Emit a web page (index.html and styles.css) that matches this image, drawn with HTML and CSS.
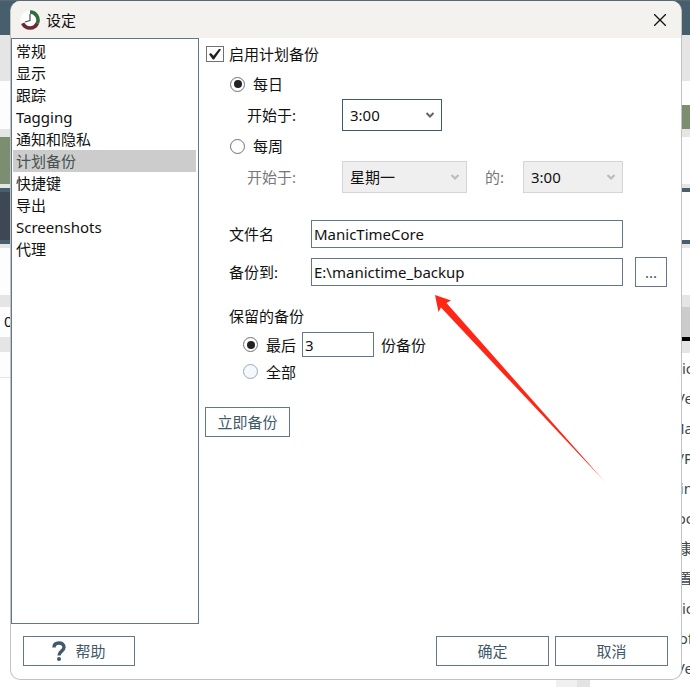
FILE: index.html
```
<!DOCTYPE html>
<html lang="zh-CN">
<head>
    <meta charset="UTF-8">
    <meta name="viewport" content="width=device-width, initial-scale=1.0">
    <title>设定</title>
    <link rel="stylesheet" href="styles.css">
</head>
<body>
    <!-- Main window behind the dialog -->
    <div class="backdrop">
        <div class="edge">
            <div class="bar slate h35"></div>
            <div class="bar grey h46"></div>
            <div class="bar h48"></div>
            <div class="bar grey h8"></div>
            <div class="bar green h47"></div>
            <div class="bar grey h4"></div>
            <div class="bar slate h4"></div>
            <div class="bar dark h48"></div>
            <div class="bar slate h4"></div>
            <div class="bar grey h4"></div>
            <div class="bar h47"></div>
            <div class="bar grey h12"></div>
            <div class="bar hour h30">0</div>
            <div class="bar grey h15"></div>
            <div class="bar day"></div>
        </div>
        <div class="scroll"></div>
        <div class="edge edge-right">
            <div class="bar slate h35"></div>
            <div class="bar grey h46"></div>
            <div class="bar h24"></div>
            <div class="bar green h24"></div>
            <div class="bar grey h8"></div>
            <div class="bar h47"></div>
            <div class="bar grey h4"></div>
            <div class="bar slate h4"></div>
            <div class="bar h48"></div>
            <div class="bar slate h4"></div>
            <div class="bar grey h4"></div>
            <div class="bar h47"></div>
            <div class="bar grey h12"></div>
            <div class="bar silver h30"></div>
            <div class="bar black h4"></div>
            <div class="bar grey h12"></div>
            <ul class="apps">
                <li>nic</li>
                <li>Ve</li>
                <li>Ma</li>
                <li>VP</li>
                <li>Vin</li>
                <li>oc</li>
                <li>康</li>
                <li>置</li>
                <li>aic</li>
                <li>of</li>
                <li>Ve</li>
            </ul>
        </div>
    </div>

    <div class="dialog">
        <header class="titlebar">
            <svg class="logo" viewBox="0 0 20 20" width="20" height="20">
                <circle cx="10" cy="10" r="9.500" fill="#fff"/>
                <path d="M10 2A8 8 0 0 1 17.300 13.300" fill="none" stroke="#2f6b3b" stroke-width="3.600"/>
                <path d="M17.300 13.300A8 8 0 0 1 2.700 13.300" fill="none" stroke="#6b2a2e" stroke-width="3.600"/>
                <path d="M10 4v6.500L5 12" fill="none" stroke="#555" stroke-width="1.300"/>
            </svg>
            <h1>设定</h1>
            <button class="close" type="button" aria-label="关闭">
                <svg viewBox="0 0 12 12" width="12" height="12">
                    <path d="M0 0L12 12M12 0L0 12" stroke="#111" stroke-width="1.300"/>
                </svg>
            </button>
        </header>

        <div class="content">
            <ul class="menu">
                <li>常规</li>
                <li>显示</li>
                <li>跟踪</li>
                <li>Tagging</li>
                <li>通知和隐私</li>
                <li class="selected">计划备份</li>
                <li>快捷键</li>
                <li>导出</li>
                <li>Screenshots</li>
                <li>代理</li>
            </ul>

            <form class="panel">
                <div class="row">
                    <input type="checkbox" id="enable" checked>
                    <label for="enable">启用计划备份</label>
                </div>
                <div class="row indent">
                    <input type="radio" name="period" id="daily" checked>
                    <label for="daily">每日</label>
                </div>
                <div class="row start">
                    <label for="daily-time">开始于:</label>
                    <div class="combo">
                        <select id="daily-time"><option>3:00</option></select>
                        <svg viewBox="0 0 8 6" width="8" height="6"><path d="M0.500 1l3.500 3.500 3.500-3.500"/></svg>
                    </div>
                </div>
                <div class="row indent">
                    <input type="radio" name="period" id="weekly">
                    <label for="weekly">每周</label>
                </div>
                <div class="row start disabled">
                    <label for="weekday">开始于:</label>
                    <div class="combo wide">
                        <select id="weekday" disabled><option>星期一</option></select>
                        <svg viewBox="0 0 8 6" width="8" height="6"><path d="M0.500 1l3.500 3.500 3.500-3.500"/></svg>
                    </div>
                    <label class="at" for="weekly-time">的:</label>
                    <div class="combo">
                        <select id="weekly-time" disabled><option>3:00</option></select>
                        <svg viewBox="0 0 8 6" width="8" height="6"><path d="M0.500 1l3.500 3.500 3.500-3.500"/></svg>
                    </div>
                </div>

                <div class="fields">
                    <label for="filename">文件名</label>
                    <input type="text" id="filename" value="ManicTimeCore">
                    <span></span>
                    <label for="folder">备份到:</label>
                    <input type="text" id="folder" value="E:\manictime_backup">
                    <button class="browse" type="button">...</button>
                </div>

                <h2>保留的备份</h2>
                <div class="row keep">
                    <input type="radio" name="keep" id="keep-last" checked>
                    <label for="keep-last">最后</label>
                    <input type="text" class="count" id="count" value="3">
                    <label for="count">份备份</label>
                </div>
                <div class="row keep">
                    <input type="radio" name="keep" id="keep-all">
                    <label for="keep-all">全部</label>
                </div>
                <button class="backup" type="button">立即备份</button>

                <svg class="arrow" viewBox="0 0 172 188" width="172" height="188">
                    <defs>
                        <linearGradient id="fade" x1="0" y1="0" x2="1" y2="1">
                            <stop offset="0.9" stop-color="#ff2616"/>
                            <stop offset="1" stop-color="#ff2616" stop-opacity="0.4"/>
                        </linearGradient>
                    </defs>
                    <path d="M0 0L16 5.500 11.500 8 171 188 6 12.500 3.500 17z" fill="url(#fade)"/>
                </svg>
            </form>
        </div>

        <footer class="footer">
            <button class="help" type="button">
                <svg viewBox="0 0 14 20" width="14" height="20">
                    <path d="M2 6.500C2 3.500 4 2 7 2s5 1.500 5 4.200c0 4-5 3.800-5 8.300" fill="none" stroke="#3f5a6b" stroke-width="3.400"/>
                    <circle cx="7" cy="18" r="2" fill="#3f5a6b"/>
                </svg>
                帮助
            </button>
            <button type="button">确定</button>
            <button type="button">取消</button>
        </footer>
    </div>
</body>
</html>
```
FILE: styles.css
```
* {
    box-sizing: border-box;
}
body {
    margin: 0;
    min-height: 100vh;
    display: flex;
    position: relative;
    background-color: #fff;
    font-family: "Noto Sans", "Noto Sans CJK SC", sans-serif;
    font-size: 15px;
    line-height: 22px;
    color: #111;
}
ul {
    list-style: none;
    margin: 0;
    padding: 0;
}
h1, h2 {
    margin: 0;
    font-size: 15px;
    font-weight: normal;
}

/* main window */
.backdrop {
    position: absolute;
    inset: 0;
    display: flex;
    justify-content: space-between;
    overflow: hidden;
    border-top: 1px solid #596974;
}
.edge {
    width: 24px;
    margin-top: -1px;
}
.bar {
    background-color: #fdfdfd;
}
.grey { background-color: #e5e5e5; }
.slate { background-color: #475e6d; }
.green { background-color: #7b8f70; }
.dark { background-color: #3e4754; }
.silver { background-color: #ccc; }
.black { background-color: #000; }
.h4 { height: 4px; }
.h8 { height: 8px; }
.h12 { height: 12px; }
.h15 { height: 15px; }
.h24 { height: 24px; }
.h30 { height: 30px; }
.h35 { height: 35px; }
.h46 { height: 46px; }
.h47 { height: 47px; }
.h48 { height: 48px; }
.hour {
    padding-left: 4px;
    line-height: 28px;
}
.day {
    height: 26px;
    border-bottom: 1px solid #e5e5e5;
}
.scroll {
    width: 34px;
    height: 7px;
    align-self: flex-end;
    margin-left: auto;
    margin-right: 76px;
    background: linear-gradient(to right, #f0f0f0 21px, #e3e3e3 21px);
}
.apps {
    margin-right: -3px;
}
.apps li {
    display: flex;
    justify-content: flex-end;
    line-height: 30px;
    color: #40474c;
}

/* dialog */
.dialog {
    position: relative;
    flex: 1;
    display: flex;
    flex-direction: column;
    margin: 1px 8px 7px 10px;
    border: 1px solid #c0c2c4;
    border-top: none;
    border-radius: 10px;
    background-color: #fff;
    overflow: hidden;
}
.titlebar {
    display: flex;
    align-items: center;
    height: 37px;
    padding: 0 15px 0 9px;
    background-color: #f3f2ef;
}
.titlebar h1 {
    flex: 1;
    margin-left: 6px;
}
.close {
    display: flex;
    padding: 0;
    border: none;
    background: none;
}
.content {
    flex: 1;
    display: flex;
}
.menu {
    width: 188px;
    padding: 1px 2px 1px 1px;
    border: 1px solid #637887;
}
.menu li {
    padding-left: 3px;
}
.menu .selected {
    background-color: #ccc;
    color: #46524f;
}

/* backup settings */
.panel {
    position: relative;
    flex: 1;
    padding: 1px 14px 0 6px;
}
.row {
    display: flex;
    align-items: center;
    min-height: 30px;
}
.indent {
    padding-left: 25px;
}
.start {
    padding-left: 42px;
}
.start > label {
    width: 95px;
}
.start > .at {
    width: 38px;
    margin-left: 18px;
}
.disabled {
    color: #777;
}
input[type="checkbox"], input[type="radio"] {
    appearance: none;
    display: flex;
    align-items: center;
    justify-content: center;
    margin: 0;
    border: 1px solid #707070;
    background-color: #fff;
}
input[type="checkbox"] {
    width: 18px;
    height: 16px;
    margin: 0 5px 0 1px;
}
input[type="checkbox"]:checked::before {
    content: "";
    width: 12px;
    height: 11px;
    background-color: #222;
    clip-path: polygon(0 52%, 15% 40%, 38% 66%, 86% 0, 100% 10%, 42% 100%, 32% 100%);
}
input[type="radio"] {
    width: 15px;
    height: 15px;
    margin-right: 8px;
    border-radius: 50%;
}
input[type="radio"]:checked::before {
    content: "";
    width: 8px;
    height: 8px;
    border-radius: 50%;
    background-color: #222;
}
.combo {
    display: grid;
    align-items: center;
    width: 100px;
}
.combo.wide {
    width: 125px;
}
.combo select, .combo svg {
    grid-area: 1 / 1;
}
.combo select {
    appearance: none;
    width: 100%;
    height: 32px;
    padding: 0 7px;
    border: 1px solid #3f5a6b;
    border-radius: 0;
    background-color: #fff;
    font: inherit;
    color: #111;
}
.combo select:disabled {
    border-color: #d5d5d5;
    background-color: #efefef;
    opacity: 1;
}
.combo svg {
    justify-self: end;
    margin-right: 8px;
    pointer-events: none;
    fill: none;
    stroke: #666;
    stroke-width: 2;
}
.disabled .combo svg {
    stroke: #bbb;
}
.fields {
    display: grid;
    grid-template-columns: 82px 1fr 44px;
    align-items: center;
    row-gap: 9px;
    margin: 27px 0 14px;
    padding-left: 24px;
}
input[type="text"] {
    width: 100%;
    height: 28px;
    padding: 0 2px;
    border: 1px solid #637887;
    background-color: #fff;
    font: inherit;
    color: #111;
}
h2 {
    padding-left: 24px;
    line-height: 30px;
}
.keep {
    min-height: 27px;
    padding-left: 38px;
}
#keep-all {
    border-color: #9aa9bd;
    background-color: #f5f8fc;
}
input.count {
    width: 72px;
    height: 25px;
    margin: 0 7px 0 6px;
}
button {
    font: inherit;
    color: #3f5a6b;
}
.browse, .backup, .footer button {
    height: 30px;
    padding: 0;
    border: 1px solid #637887;
    background-color: #fff;
}
.browse {
    width: 32px;
    justify-self: end;
}
.backup {
    width: 85px;
    margin-top: 22px;
}
.arrow {
    position: absolute;
    left: 236px;
    top: 257px;
}

.footer {
    display: flex;
    gap: 6px;
    padding: 12px 13px 13px 12px;
}
.footer button {
    width: 113px;
}
.footer .help {
    display: flex;
    align-items: center;
    justify-content: center;
    gap: 9px;
    width: 112px;
    margin-right: auto;
}
```
